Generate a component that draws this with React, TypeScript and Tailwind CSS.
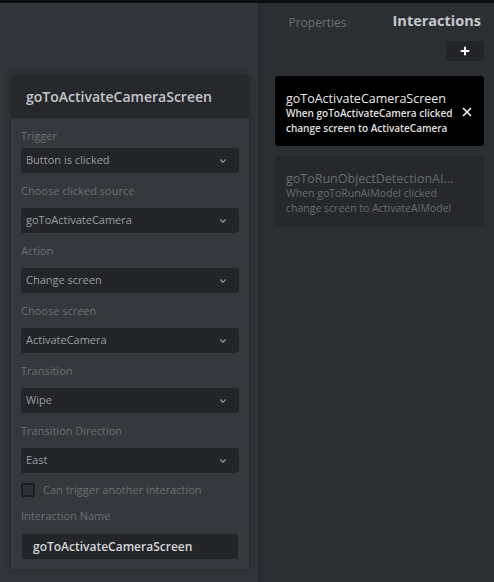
import { ChevronDown, X, Plus } from "lucide-react";

const font = { fontFamily: '"Open Sans", "Noto Sans", sans-serif' };

function Select({ value, className = "" }: { value: string; className?: string }) {
    return (
        <div
            className={`flex items-center justify-between h-[25px] bg-[#232528] rounded-[3px] pl-[5px] pr-[11px] ${className}`}
        >
            <span className="text-[11px] text-[#9a9ea2]">{value}</span>
            <ChevronDown size={10} strokeWidth={3} className="text-[#8a8e92]" />
        </div>
    );
}

function Label({ text, className = "" }: { text: string; className?: string }) {
    return (
        <div className={`text-[11px] leading-4 text-[#6c7075] ${className}`}>
            {text}
        </div>
    );
}

export default function App() {
    const fields = [
        { label: "Choose clicked source", value: "goToActivateCamera" },
        { label: "Action", value: "Change screen" },
        { label: "Choose screen", value: "ActivateCamera" },
        { label: "Transition", value: "Wipe" },
        { label: "Transition Direction", value: "East" },
    ];

    return (
        <div className="w-[494px] h-[582px] flex flex-col bg-[#32353a] overflow-hidden" style={font}>
            <div className="h-[3px] bg-[#0d0f10]"></div>
            <div className="flex flex-1">
                {/* left: interaction editor */}
                <div className="w-[258px] pt-[72px] pl-[11px]">
                    <div className="w-[238px] rounded-t-[4px] shadow-[0_0_8px_rgba(0,0,0,0.35)]">
                        <div className="h-[43px] flex items-center px-[15px] bg-[#26282b] rounded-t-[4px]">
                            <span className="text-[14px] font-semibold text-[#c3c7cb]">
                                goToActivateCameraScreen
                            </span>
                        </div>
                        <div className="bg-[#35383c] px-[10px] pt-[10px] pb-[10px]">
                            <Label text="Trigger" />
                            <Select value="Button is clicked" className="mt-1" />
                            {fields.map((f) => (
                                <div key={f.label}>
                                    <Label text={f.label} className="mt-[10px]" />
                                    <Select value={f.value} className="mt-[9px]" />
                                </div>
                            ))}
                            <div className="flex items-center mt-[10px] h-[14px]">
                                <div className="w-[14px] h-[14px] rounded-[3px] border-2 border-[#1c1d1f] bg-[#2e3034]"></div>
                                <span className="ml-2 text-[11px] text-[#6c7075]">
                                    Can trigger another interaction
                                </span>
                            </div>
                            <Label text="Interaction Name" className="mt-[11px]" />
                            <div className="mt-[10px] mx-px h-[25px] flex items-center bg-[#232528] rounded-[3px] px-[11px]">
                                <span className="text-[12px] font-semibold text-[#d5d8db]">
                                    goToActivateCameraScreen
                                </span>
                            </div>
                        </div>
                    </div>
                </div>

                {/* right: interactions list */}
                <div className="flex-1 border-l-2 border-[#26292c] bg-[#2c2f32] pl-[15px] pr-[10px]">
                    <div className="flex items-end justify-end gap-[46px] pr-[3px] h-[29px] pb-[1px]">
                        <span className="text-[12px] text-[#6c7075] leading-4">Properties</span>
                        <span className="text-[14.5px] font-bold text-[#c5c9cd] leading-5">Interactions</span>
                    </div>
                    <div className="flex justify-end mt-[9px]">
                        <div className="w-[38px] h-[20px] flex items-center justify-center bg-[#232528] rounded-[2px]">
                            <Plus size={12} strokeWidth={4} className="text-white" />
                        </div>
                    </div>
                    <div className="mt-[15px] h-[70px] bg-black rounded-[3px] pl-[11px] pr-[10px] pt-[15px] flex justify-between">
                        <div className="flex-1 min-w-0 whitespace-nowrap">
                            <div className="text-[12.5px] leading-[15px] text-[#e8e8e8]">
                                goToActivateCameraScreen
                            </div>
                            <div className="text-[10px] leading-[15px] font-semibold text-[#e0e0e0]">
                                When goToActivateCamera clicked
                            </div>
                            <div className="text-[10px] leading-[15px] font-semibold text-[#e0e0e0]">
                                change screen to ActivateCamera
                            </div>
                        </div>
                        <X size={14} strokeWidth={3} className="shrink-0 text-[#e8e8e8] mt-[14px]" />
                    </div>
                    <div className="mt-[10px] h-[70px] bg-[#26282b] rounded-[3px] pl-[11px] pr-[10px] pt-[15px] whitespace-nowrap">
                        <div className="text-[12.5px] leading-[15px] text-[#686c70]">
                            goToRunObjectDetectionAI...
                        </div>
                        <div className="text-[10.5px] leading-[15px] text-[#686c70]">
                            When goToRunAIModel clicked
                        </div>
                        <div className="text-[10.5px] leading-[15px] text-[#686c70]">
                            change screen to ActivateAIModel
                        </div>
                    </div>
                </div>
            </div>
        </div>
    );
}
